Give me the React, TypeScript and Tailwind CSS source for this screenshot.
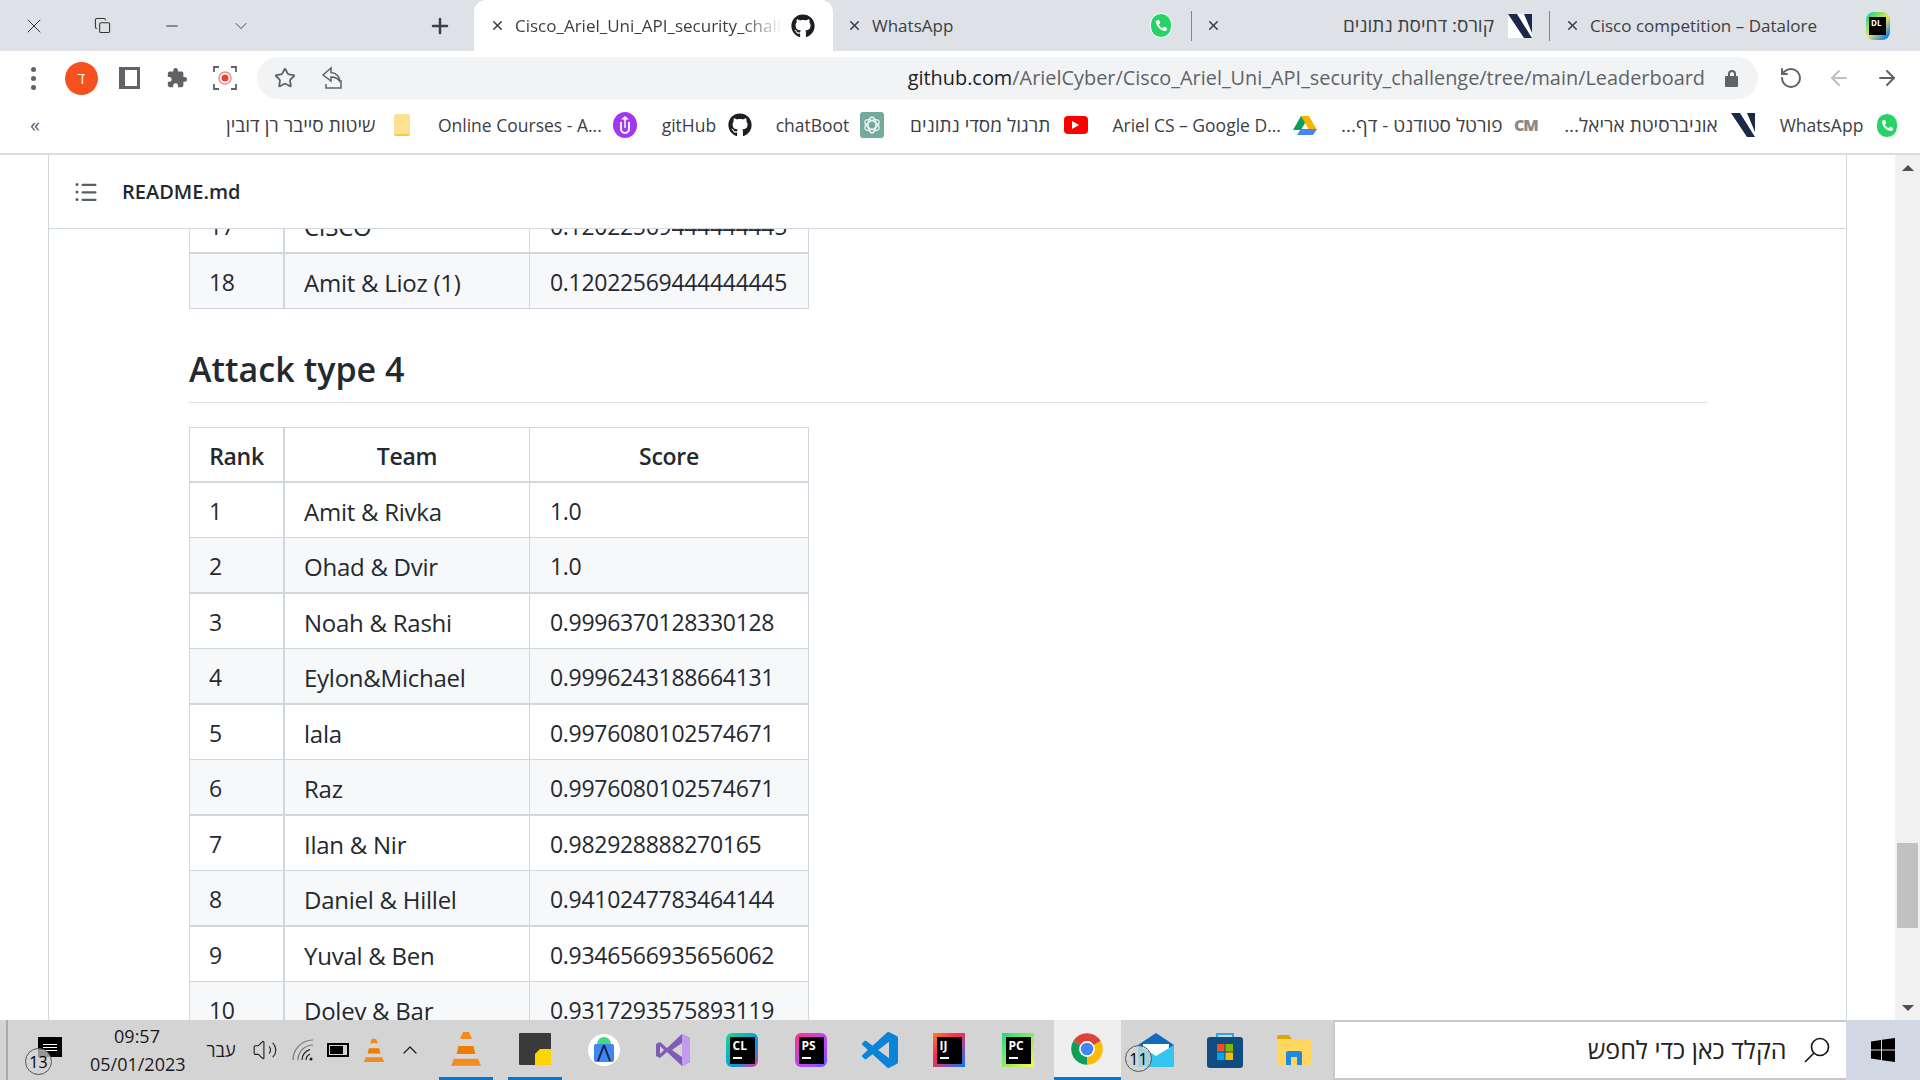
import type { ReactNode } from "react";
import { ArrowLeft, ArrowRight, ChevronDown, ChevronUp, Copy, Minus, Plus, RotateCw, Star, Volume2, X } from "lucide-react";
import { FaGithub, FaPhoneAlt } from "react-icons/fa";

const GitHubIcon = () => <FaGithub className="w-[24px] h-[24px] text-[#1b1f23]" />;

const WhatsAppIcon = () => (
  <div className="w-[22px] h-[25px] rounded-full bg-[#25d366] border border-white flex items-center justify-center">
    <FaPhoneAlt className="w-[11px] h-[11px] text-white" />
  </div>
);

const ArielIcon = () => (
  <svg width="24" height="24" viewBox="0 0 24 24">
    <rect width="24" height="24" fill="#fff" />
    <path d="M0 0h9l15 24h-8z" fill="#1b2a4a" />
    <path d="M16 0h8v19z" fill="#1b2a4a" />
  </svg>
);

const DataloreIcon = () => (
  <div className="relative w-[24px] h-[28px]">
    <div className="absolute inset-0 rounded-[8px] bg-[linear-gradient(135deg,#21d789_10%,#f3e24b_50%,#087cfa_90%)]" />
    <div className="absolute left-[3px] top-[5px] w-[17px] h-[18px] bg-black text-white text-[8px] font-bold leading-[10px] pl-[2px] pt-[1px]">DL</div>
  </div>
);

const Drive = () => (
  <svg width="24" height="24" viewBox="0 0 24 24">
    <path d="M8 2h8l-8 14H0z" fill="#0f9d58" transform="translate(0 1)" />
    <path d="M8 3h8l8 14h-8z" fill="#f4b400" />
    <path d="M4 22l4-6h16l-4 6z" fill="#4285f4" />
  </svg>
);

const Youtube = () => (
  <div className="w-[24px] h-[18px] rounded-[4px] bg-[#f00] flex items-center justify-center">
    <div className="w-0 h-0 border-y-[4px] border-y-transparent border-l-[7px] border-l-white" />
  </div>
);

const Udemy = () => (
  <svg width="24" height="26" viewBox="0 0 24 26">
    <ellipse cx="12" cy="13" rx="12" ry="13" fill="#a435f0" />
    <path d="M8 10v7a4 4 0 0 0 8 0v-7" fill="none" stroke="#fff" strokeWidth="2" />
    <path d="M12 4l4 3.500H8z" fill="#fff" />
    <path d="M12 7v9" stroke="#fff" strokeWidth="1.5" />
  </svg>
);

const ChatGpt = () => (
  <svg width="24" height="26" viewBox="0 0 24 26">
    <rect width="24" height="26" rx="3" fill="#74aa9c" />
    <g fill="none" stroke="#fff" strokeWidth="1.300" opacity="0.9">
      <ellipse cx="12" cy="13" rx="4" ry="8" />
      <ellipse cx="12" cy="13" rx="4" ry="8" transform="rotate(60 12 13)" />
      <ellipse cx="12" cy="13" rx="4" ry="8" transform="rotate(120 12 13)" />
    </g>
  </svg>
);

const Vlc = ({ size }: { size: number }) => (
  <svg width={size} height={size * 1.12} viewBox="0 0 32 36">
    <path d="M13 1h6l3 7H10z" fill="#f28c1e" />
    <path d="M10.500 8h11l2 7h-15z" fill="#d8d8d8" />
    <path d="M8.500 15h15l2 8h-19z" fill="#f07d00" />
    <path d="M6.500 23h19l2 5h-23z" fill="#d8d8d8" />
    <path d="M4 28h24l3 7H1z" fill="#f28c1e" />
  </svg>
);

const Chrome = () => (
  <svg width="38" height="38" viewBox="0 0 48 48">
    <path d="M24 24L6.700 14A20 20 0 0 1 41.300 14z" fill="#db4437" />
    <path d="M24 24L6.700 14A20 20 0 0 0 24 44z" fill="#0f9d58" />
    <path d="M24 24L41.300 14A20 20 0 0 1 24 44z" fill="#fbbc05" />
    <circle cx="24" cy="24" r="10" fill="#fff" />
    <circle cx="24" cy="24" r="8" fill="#4285f4" />
  </svg>
);

const Jet = ({ label, bg }: { label: string; bg: string }) => (
  <div className={`relative w-[32px] h-[34px] flex items-center justify-center ${bg}`}>
    <div className="w-[25px] h-[27px] bg-black text-white text-[12px] font-bold leading-[14px] px-[3px] pt-[2px]">
      {label}
      <div className="w-[9px] h-[2px] bg-white mt-[4px]" />
    </div>
  </div>
);

function Tab({ className, label, icon, rtl }: { className: string; label: string; icon: ReactNode; rtl?: boolean }) {
  return (
    <div className={`flex items-center h-full ${className}`}>
      <X className="w-[15px] h-[15px] text-[#3c4043] shrink-0" strokeWidth={2.5} />
      <div
        dir={rtl ? "rtl" : undefined}
        className={`flex-1 min-w-0 pl-[10px] whitespace-nowrap text-[#3c4043] ${rtl ? "text-right text-[19px] pr-[14px]" : "text-[17px] pr-[6px]"}`}
      >
        {label}
      </div>
      {icon}
    </div>
  );
}

const bookmarks: { label: string; width: string; icon: ReactNode; rtl?: boolean }[] = [
  {
    label: "שיטות סייבר רן דובין",
    width: "w-[155px]",
    rtl: true,
    icon: <div className="w-[16px] h-[22px] rounded-[2px] bg-[#fde293] border-b-2 border-[#f2c94c]" />,
  },
  { label: "Online Courses - A...", width: "w-[162px]", icon: <Udemy /> },
  { label: "gitHub", width: "w-[55px]", icon: <GitHubIcon /> },
  { label: "chatBoot", width: "w-[71px]", icon: <ChatGpt /> },
  { label: "תרגול מסדי נתונים", width: "w-[143px]", rtl: true, icon: <Youtube /> },
  { label: "Ariel CS – Google D...", width: "w-[169px]", icon: <Drive /> },
  {
    label: "פורטל סטודנט - דף...",
    width: "w-[160px]",
    rtl: true,
    icon: <div className="w-[24px] text-center text-[16px] font-extrabold tracking-[-1px] text-[#8a8a8a]">CM</div>,
  },
  { label: "אוניברסיטת אריאל...", width: "w-[157px]", rtl: true, icon: <ArielIcon /> },
  { label: "WhatsApp", width: "w-[83px]", icon: <WhatsAppIcon /> },
];

const attackRows = [
  ["1", "Amit & Rivka", "1.0"],
  ["2", "Ohad & Dvir", "1.0"],
  ["3", "Noah & Rashi", "0.9996370128330128"],
  ["4", "Eylon&Michael", "0.9996243188664131"],
  ["5", "lala", "0.9976080102574671"],
  ["6", "Raz", "0.9976080102574671"],
  ["7", "Ilan & Nir", "0.982928888270165"],
  ["8", "Daniel & Hillel", "0.9410247783464144"],
  ["9", "Yuval & Ben", "0.9346566935656062"],
  ["10", "Dolev & Bar", "0.9317293575893119"],
];

function Row({ cells, shaded, thick }: { cells: string[]; shaded: boolean; thick: boolean }) {
  const line = thick ? "border-b-2 h-[56px]" : "border-b h-[55px]";
  const bg = shaded ? "bg-[#f6f8fa]" : "bg-white";
  return (
    <tr>
      <td className={`border-l border-r-2 border-[#d0d7de] pl-[19px] pt-[3px] ${line} ${bg}`}>{cells[0]}</td>
      <td className={`border-r border-[#d0d7de] pl-[19px] pt-[3px] text-[24px] tracking-[-0.25px] ${line} ${bg}`}>{cells[1]}</td>
      <td className={`border-r border-[#d0d7de] pl-[20px] pt-[3px] ${line} ${bg}`}>{cells[2]}</td>
    </tr>
  );
}

function Cols() {
  return (
    <colgroup>
      <col className="w-[96px]" />
      <col className="w-[245px]" />
      <col className="w-[279px]" />
    </colgroup>
  );
}

function App() {
  return (
    <div className="w-[1920px] h-[1080px] overflow-hidden flex flex-col bg-white font-['Open_Sans','Liberation_Sans',sans-serif]">
      {/* tab strip */}
      <div className="h-[51px] shrink-0 bg-[#dee1e6] flex items-center">
        <div className="-ml-px w-[69px] flex justify-center"><X className="w-[24px] h-[24px] text-[#333]" strokeWidth={1} /></div>
        <div className="w-[69px] flex justify-center"><Copy className="w-[17px] h-[19px] text-[#333]" strokeWidth={1.5} /></div>
        <div className="w-[69px] flex justify-center"><Minus className="w-[18px] h-[18px] text-[#333]" strokeWidth={1.5} /></div>
        <div className="w-[69px] flex justify-center"><ChevronDown className="w-[20px] h-[20px] text-[#333]" strokeWidth={1} /></div>
        <div className="w-[199px] flex justify-end pr-[22px]"><Plus className="w-[24px] h-[24px] text-[#3c4043]" strokeWidth={2.5} /></div>
        <div className="w-[359px] h-full bg-white rounded-t-[12px] overflow-hidden">
          <Tab
            className="pl-[16px] pr-[18px] [&>div]:mr-[9px] [&>div]:overflow-hidden [&>div]:[mask-image:linear-gradient(to_left,transparent,black_40px)]"
            label="Cisco_Ariel_Uni_API_security_challenge"
            icon={<GitHubIcon />}
          />
        </div>
        <Tab className="w-[358px] pl-[14px] pr-[19px]" label="WhatsApp" icon={<WhatsAppIcon />} />
        <div className="w-px h-[30px] bg-[#80868b]" />
        <Tab className="w-[357px] pl-[14px] pr-[17px]" label="קורס: דחיסת נתונים" rtl icon={<ArielIcon />} />
        <div className="w-px h-[30px] bg-[#80868b]" />
        <Tab className="flex-1 pl-[15px] pr-[30px]" label="Cisco competition – Datalore" icon={<DataloreIcon />} />
      </div>

      {/* toolbar */}
      <div className="h-[54px] shrink-0 flex items-center pl-[9px] text-[#5f6368]">
        <div className="w-[48px] flex flex-col items-center gap-[4px]">
          <div className="w-[5px] h-[5px] rounded-full bg-[#5f6368]" />
          <div className="w-[5px] h-[5px] rounded-full bg-[#5f6368]" />
          <div className="w-[5px] h-[5px] rounded-full bg-[#5f6368]" />
        </div>
        <div className="w-[48px] flex justify-center">
          <div className="w-[33px] h-[33px] rounded-full bg-[#f4511e] text-white text-[15px] flex items-center justify-center" dir="rtl">ד</div>
        </div>
        <div className="w-[48px] flex justify-center">
          <div className="w-[21px] h-[22px] border-[3px] border-l-[6px] border-[#5f6368]" />
        </div>
        <div className="w-[48px] flex justify-center">
          <svg width="22" height="22" viewBox="0 0 24 24" fill="#5f6368"><path d="M20.500 11H19V7a2 2 0 0 0-2-2h-4V3.500a2.500 2.500 0 0 0-5 0V5H4a2 2 0 0 0-2 2v3.800h1.500a2.700 2.700 0 0 1 0 5.400H2V20a2 2 0 0 0 2 2h3.800v-1.500a2.700 2.700 0 0 1 5.400 0V22H17a2 2 0 0 0 2-2v-4h1.500a2.500 2.500 0 0 0 0-5z" /></svg>
        </div>
        <div className="w-[48px] flex justify-center">
          <svg width="24" height="24" viewBox="0 0 24 24" fill="none">
            <path d="M1 6V1h5M18 1h5v5M23 18v5h-5M6 23H1v-5" stroke="#5f6368" strokeWidth="1.800" />
            <circle cx="12" cy="12" r="6" stroke="#f28b82" strokeWidth="1.500" />
            <circle cx="12" cy="12" r="3.500" fill="#ea4335" />
          </svg>
        </div>
        <div className="ml-[8px] w-[1501px] h-[42px] rounded-full bg-[#f1f3f4] flex items-center pl-[17px] pr-[20px]">
          <Star className="w-[22px] h-[22px]" strokeWidth={2} />
          <svg className="ml-[25px]" width="22" height="24" viewBox="0 0 22 24" fill="none" stroke="#5f6368" strokeWidth="1.500">
            <path d="M10 2L2 9l8 6v-4c4 0 7 1 9 5-.5-5-3-9-9-9.500z" />
            <path d="M20 14v8H5v-4" />
          </svg>
          <div className="ml-auto whitespace-nowrap text-[19.9px] leading-normal text-[#5f6368]">
            <span className="text-[#202124]">github.com</span>/ArielCyber/Cisco_Ariel_Uni_API_security_challenge/tree/main/Leaderboard
          </div>
          <div className="ml-[20px] flex flex-col items-center">
            <div className="w-[8px] h-[6px] rounded-t-full border-2 border-b-0 border-[#5f6368]" />
            <div className="w-[13px] h-[11px] rounded-[1px] bg-[#5f6368]" />
          </div>
        </div>
        <div className="ml-[8px] w-[49px] flex justify-center"><RotateCw className="w-[24px] h-[24px] -scale-x-100" strokeWidth={2} /></div>
        <div className="w-[48px] flex justify-center"><ArrowLeft className="w-[24px] h-[24px] text-[#bdc1c6]" strokeWidth={2} /></div>
        <div className="w-[48px] flex justify-center"><ArrowRight className="w-[24px] h-[24px]" strokeWidth={2} /></div>
      </div>

      {/* bookmarks */}
      <div className="h-[50px] shrink-0 flex items-center pb-[8px] pr-[21px] border-b-2 border-[#dadce0]">
        <div className="w-[70px] text-center text-[20px] text-[#5f6368]">«</div>
        <div className="flex-1 flex items-center justify-end gap-[24.6px]">
          {bookmarks.map((b) => (
            <div key={b.label} className="flex items-center gap-[12px]">
              <div dir={b.rtl ? "rtl" : undefined} className={`${b.width} flex justify-center whitespace-nowrap text-[#3c4043] ${b.rtl ? "text-[19px]" : "text-[17.500px]"}`}>
                {b.label}
              </div>
              <div className="w-[24px] h-[24px] flex items-center justify-center">{b.icon}</div>
            </div>
          ))}
        </div>
      </div>

      {/* page */}
      <div className="flex-1 min-h-0 flex">
        <div className="w-[48px] shrink-0" />
        <div className="w-[1799px] shrink-0 flex flex-col border-x border-[#d0d7de]">
          <div className="h-[74px] shrink-0 flex items-center border-b border-[#d0d7de] bg-white pl-[25px]">
            <svg width="24" height="24" viewBox="0 0 16 16" fill="#57606a">
              <path d="M2 4a1 1 0 1 1 0-2 1 1 0 0 1 0 2zm3.750-1.500h8.500a.75.75 0 0 1 0 1.500h-8.500a.75.75 0 0 1 0-1.500zm0 5h8.500a.75.75 0 0 1 0 1.500h-8.500a.75.75 0 0 1 0-1.500zm0 5h8.500a.75.75 0 0 1 0 1.500h-8.500a.75.75 0 0 1 0-1.500zM3 8a1 1 0 1 1-2 0 1 1 0 0 1 2 0zm-1 6a1 1 0 1 1 0-2 1 1 0 0 1 0 2z" />
            </svg>
            <div className="ml-[24px] text-[20px] font-semibold text-[#24292f]">README.md</div>
          </div>
          <div className="flex-1 min-h-0 overflow-hidden pl-[140px] text-[23px] tracking-[-0.3px] text-[#24292f]">
            <div className="w-[1518px] -mt-[31px]">
              <table className="w-[620px] table-fixed border-separate border-spacing-0">
                <Cols />
                <tbody>
                  <Row cells={["17", "CISCO", "0.12022569444444445"]} shaded={false} thick />
                  <Row cells={["18", "Amit & Lioz (1)", "0.12022569444444445"]} shaded thick={false} />
                </tbody>
              </table>
              <h2 className="mt-[36px] mb-[24px] h-[58px] border-b border-[#d8dee4] text-[34px] leading-[48px] font-semibold tracking-[0.05px]">
                Attack type 4
              </h2>
              <table className="w-[620px] table-fixed border-separate border-spacing-0">
                <Cols />
                <thead>
                  <tr>
                    <th className="h-[56px] pt-[3px] border-l border-t border-r-2 border-b-2 border-[#d0d7de] font-semibold">Rank</th>
                    <th className="h-[56px] pt-[3px] border-t border-r border-b-2 border-[#d0d7de] font-semibold">Team</th>
                    <th className="h-[56px] pt-[3px] border-t border-r border-b-2 border-[#d0d7de] font-semibold">Score</th>
                  </tr>
                </thead>
                <tbody>
                  {attackRows.map((r, i) => (
                    <Row key={r[0]} cells={r} shaded={i % 2 === 1} thick={i % 2 === 1} />
                  ))}
                </tbody>
              </table>
            </div>
          </div>
        </div>
        {/* scrollbar */}
        <div className="flex-1" />
        <div className="w-[25px] shrink-0 bg-[#f1f1f1] flex flex-col items-center pt-[10px] pb-[9px]">
          <div className="w-0 h-0 border-x-[6px] border-x-transparent border-b-[6px] border-b-[#505050]" />
          <div className="mt-[672px] w-[21px] h-[85px] bg-[#c1c1c1]" />
          <div className="mt-auto w-0 h-0 border-x-[6px] border-x-transparent border-t-[6px] border-t-[#505050]" />
        </div>
      </div>

      {/* taskbar */}
      <div className="h-[60px] shrink-0 flex items-center bg-[#d4d4d4] text-[#1a1a1a]">
        <div className="w-[2px] h-full ml-[6px] bg-[#aaa]" />
        <div className="w-[82px] flex justify-center">
          <div className="relative w-[24px] h-[20px] bg-black mb-[6px] ml-[2px] flex flex-col items-center justify-center gap-[2px]">
            <div className="w-[14px] h-px bg-white" />
            <div className="w-[14px] h-px bg-white" />
            <div className="w-[14px] h-px bg-white" />
            <div className="absolute -left-[13px] top-[11px] w-[27px] h-[27px] rounded-full border border-[#555] bg-[#d4d4d4]/70 text-[16px] text-black flex items-center justify-center">13</div>
          </div>
        </div>
        <div className="w-[94px] text-center text-[18px] leading-[28px]">
          <div>09:57</div>
          <div className="whitespace-nowrap">05/01/2023</div>
        </div>
        <div dir="rtl" className="ml-[14px] w-[46px] text-center text-[18px]">עבר</div>
        <div className="w-[42px] flex justify-center"><Volume2 className="w-[26px] h-[26px]" strokeWidth={1} /></div>
        <div className="w-[34px] flex justify-center">
          <svg width="22" height="22" viewBox="0 0 22 22" fill="none" stroke="#1a1a1a" strokeWidth="1.200">
            <path d="M1 21A20 20 0 0 1 21 1" opacity="0.5" />
            <path d="M6 21A15 15 0 0 1 21 6" opacity="0.5" />
            <path d="M10 21A11 11 0 0 1 18 10.500" />
            <path d="M14 21A7 7 0 0 1 18 15" />
            <circle cx="19" cy="20" r="1.500" fill="#1a1a1a" stroke="none" />
          </svg>
        </div>
        <div className="w-[36px] flex justify-center">
          <div className="w-[22px] h-[14px] border-2 border-black p-[1px]"><div className="w-[13px] h-full bg-black" /></div>
        </div>
        <div className="w-[36px] flex justify-center"><Vlc size={22} /></div>
        <div className="w-[36px] flex justify-center"><ChevronUp className="w-[24px] h-[24px]" strokeWidth={1.2} /></div>
        <div className="ml-[3.5px] flex h-full">
          <div className="w-[69px] flex justify-center">
            <div className="w-[54px] h-full flex items-center justify-center border-b-[3px] border-[#0078d4]"><Vlc size={32} /></div>
          </div>
          <div className="w-[69px] flex justify-center">
            <div className="w-[54px] h-full flex items-center justify-center border-b-[3px] border-[#0078d4]">
              <svg width="32" height="32" viewBox="0 0 32 32">
                <rect width="32" height="32" rx="1" fill="#3a3a3a" />
                <path d="M32 16v15a1 1 0 0 1-1 1H16v-11l5-5z" fill="#ffd500" />
              </svg>
            </div>
          </div>
          <div className="w-[69px] flex items-center justify-center">
            <div className="w-[32px] h-[32px] rounded-full bg-white flex items-center justify-center">
              <svg width="24" height="26" viewBox="0 0 24 26">
                <path d="M5 7a7 7 0 0 1 14 0z" fill="#3ddc84" />
                <rect x="2" y="7" width="20" height="18" rx="2" fill="#4285f4" />
                <path d="M12 8L6 24M12 8l6 16" stroke="#0b2a4a" strokeWidth="2" />
              </svg>
            </div>
          </div>
          <div className="w-[69px] flex items-center justify-center">
            <svg width="36" height="36" viewBox="0 0 36 36">
              <path fillRule="evenodd" d="M27 2l8 4v24l-8 4-15-14-7 6-4-2V12l4-2 7 6zm0 9l-10 7 10 7zM5 14v8l4-4z" fill="#7f5cb8" />
              <path fillRule="evenodd" d="M27 2l8 4v24l-8 4z" fill="#c19bf0" />
            </svg>
          </div>
          <div className="w-[69px] flex items-center justify-center">
            <Jet label="CL" bg="rounded-[6px] bg-[linear-gradient(135deg,#21d789,#009ae5_60%,#ed358c)]" />
          </div>
          <div className="w-[69px] flex items-center justify-center">
            <Jet label="PS" bg="rounded-[6px] bg-[linear-gradient(135deg,#ff318c,#b74af7_60%,#6b57ff)]" />
          </div>
          <div className="w-[69px] flex items-center justify-center">
            <svg width="36" height="36" viewBox="0 0 24 24" fill="#0a84d8">
              <path d="M23.150 2.587L18.210.21a1.494 1.494 0 0 0-1.705.29l-9.460 8.630-4.120-3.128a.999.999 0 0 0-1.276.057L.327 7.261A1 1 0 0 0 .326 8.740L3.899 12 .326 15.260a1 1 0 0 0 .001 1.479L1.650 17.940a.999.999 0 0 0 1.276.057l4.120-3.128 9.460 8.630a1.492 1.492 0 0 0 1.704.29l4.942-2.377A1.500 1.500 0 0 0 24 20.060V3.939a1.500 1.500 0 0 0-.85-1.352zm-5.146 14.861L10.826 12l7.178-5.448v10.896z" />
            </svg>
          </div>
          <div className="w-[69px] flex items-center justify-center">
            <Jet label="IJ" bg="bg-[linear-gradient(135deg,#fc801d,#fe2857_40%,#087cfa)]" />
          </div>
          <div className="w-[69px] flex items-center justify-center">
            <Jet label="PC" bg="bg-[linear-gradient(135deg,#21d789,#fcf84a)]" />
          </div>
          <div className="w-[69px] flex justify-center">
            <div className="w-[67px] h-full flex items-center justify-center bg-[#efefef] border-b-[3px] border-[#0078d4]"><Chrome /></div>
          </div>
          <div className="w-[69px] flex items-center justify-center">
            <div className="relative">
              <svg width="36" height="34" viewBox="0 0 36 34">
                <path d="M0 12L18 0l18 12v22H0z" fill="#0f6cbd" />
                <path d="M5 11h26v14H5z" fill="#fff" />
                <path d="M0 12l18 11 18-11v22H0z" fill="#36c5f0" />
              </svg>
              <div className="absolute -left-[13px] top-[12px] w-[27px] h-[27px] rounded-full border border-[#555] bg-[#d4d4d4]/70 text-[16px] text-black flex items-center justify-center">11</div>
            </div>
          </div>
          <div className="w-[69px] flex items-center justify-center">
            <svg width="36" height="36" viewBox="0 0 36 36">
              <path d="M10 6V2h16v4" fill="none" stroke="#28a8ea" strokeWidth="2" />
              <rect y="5" width="36" height="31" rx="3" fill="#0f4c81" />
              <rect x="10" y="12" width="7.500" height="7.500" fill="#f25022" />
              <rect x="18.500" y="12" width="7.500" height="7.500" fill="#7fba00" />
              <rect x="10" y="20.500" width="7.500" height="7.500" fill="#00a4ef" />
              <rect x="18.500" y="20.500" width="7.500" height="7.500" fill="#ffb900" />
            </svg>
          </div>
          <div className="w-[69px] flex items-center justify-center">
            <svg width="34" height="30" viewBox="0 0 34 30">
              <path d="M0 2a2 2 0 0 1 2-2h10l3 4H0z" fill="#e3a400" />
              <rect y="4" width="34" height="26" rx="2" fill="#ffd75e" />
              <path d="M9 30V18a2 2 0 0 1 2-2h12a2 2 0 0 1 2 2v12h-5v-8h-6v8z" fill="#1e88e5" />
            </svg>
          </div>
        </div>
        <div className="ml-[4px] w-[513px] h-full bg-white border-y-2 border-l-2 border-[#c8c8c8] flex items-center justify-end pr-[16px]">
          <div dir="rtl" className="whitespace-nowrap text-[25px] text-[#222] mr-[17px]">הקלד כאן כדי לחפש</div>
          <svg width="26" height="26" viewBox="0 0 26 26" fill="none" stroke="#111" strokeWidth="1.600">
            <circle cx="16" cy="10" r="8.500" />
            <path d="M10 16L1 25" />
          </svg>
        </div>
        <div className="flex-1 h-full bg-[#d1d8e4] flex items-center justify-center">
          <svg width="24" height="24" viewBox="0 0 24 24" fill="#000">
            <path d="M0 3.500L10 2v9.500H0zM11 1.800L24 0v11.500H11zM0 12.500h10V22L0 20.500zM11 12.500h13V24l-13-1.800z" />
          </svg>
        </div>
      </div>
    </div>
  );
}

export default App;
